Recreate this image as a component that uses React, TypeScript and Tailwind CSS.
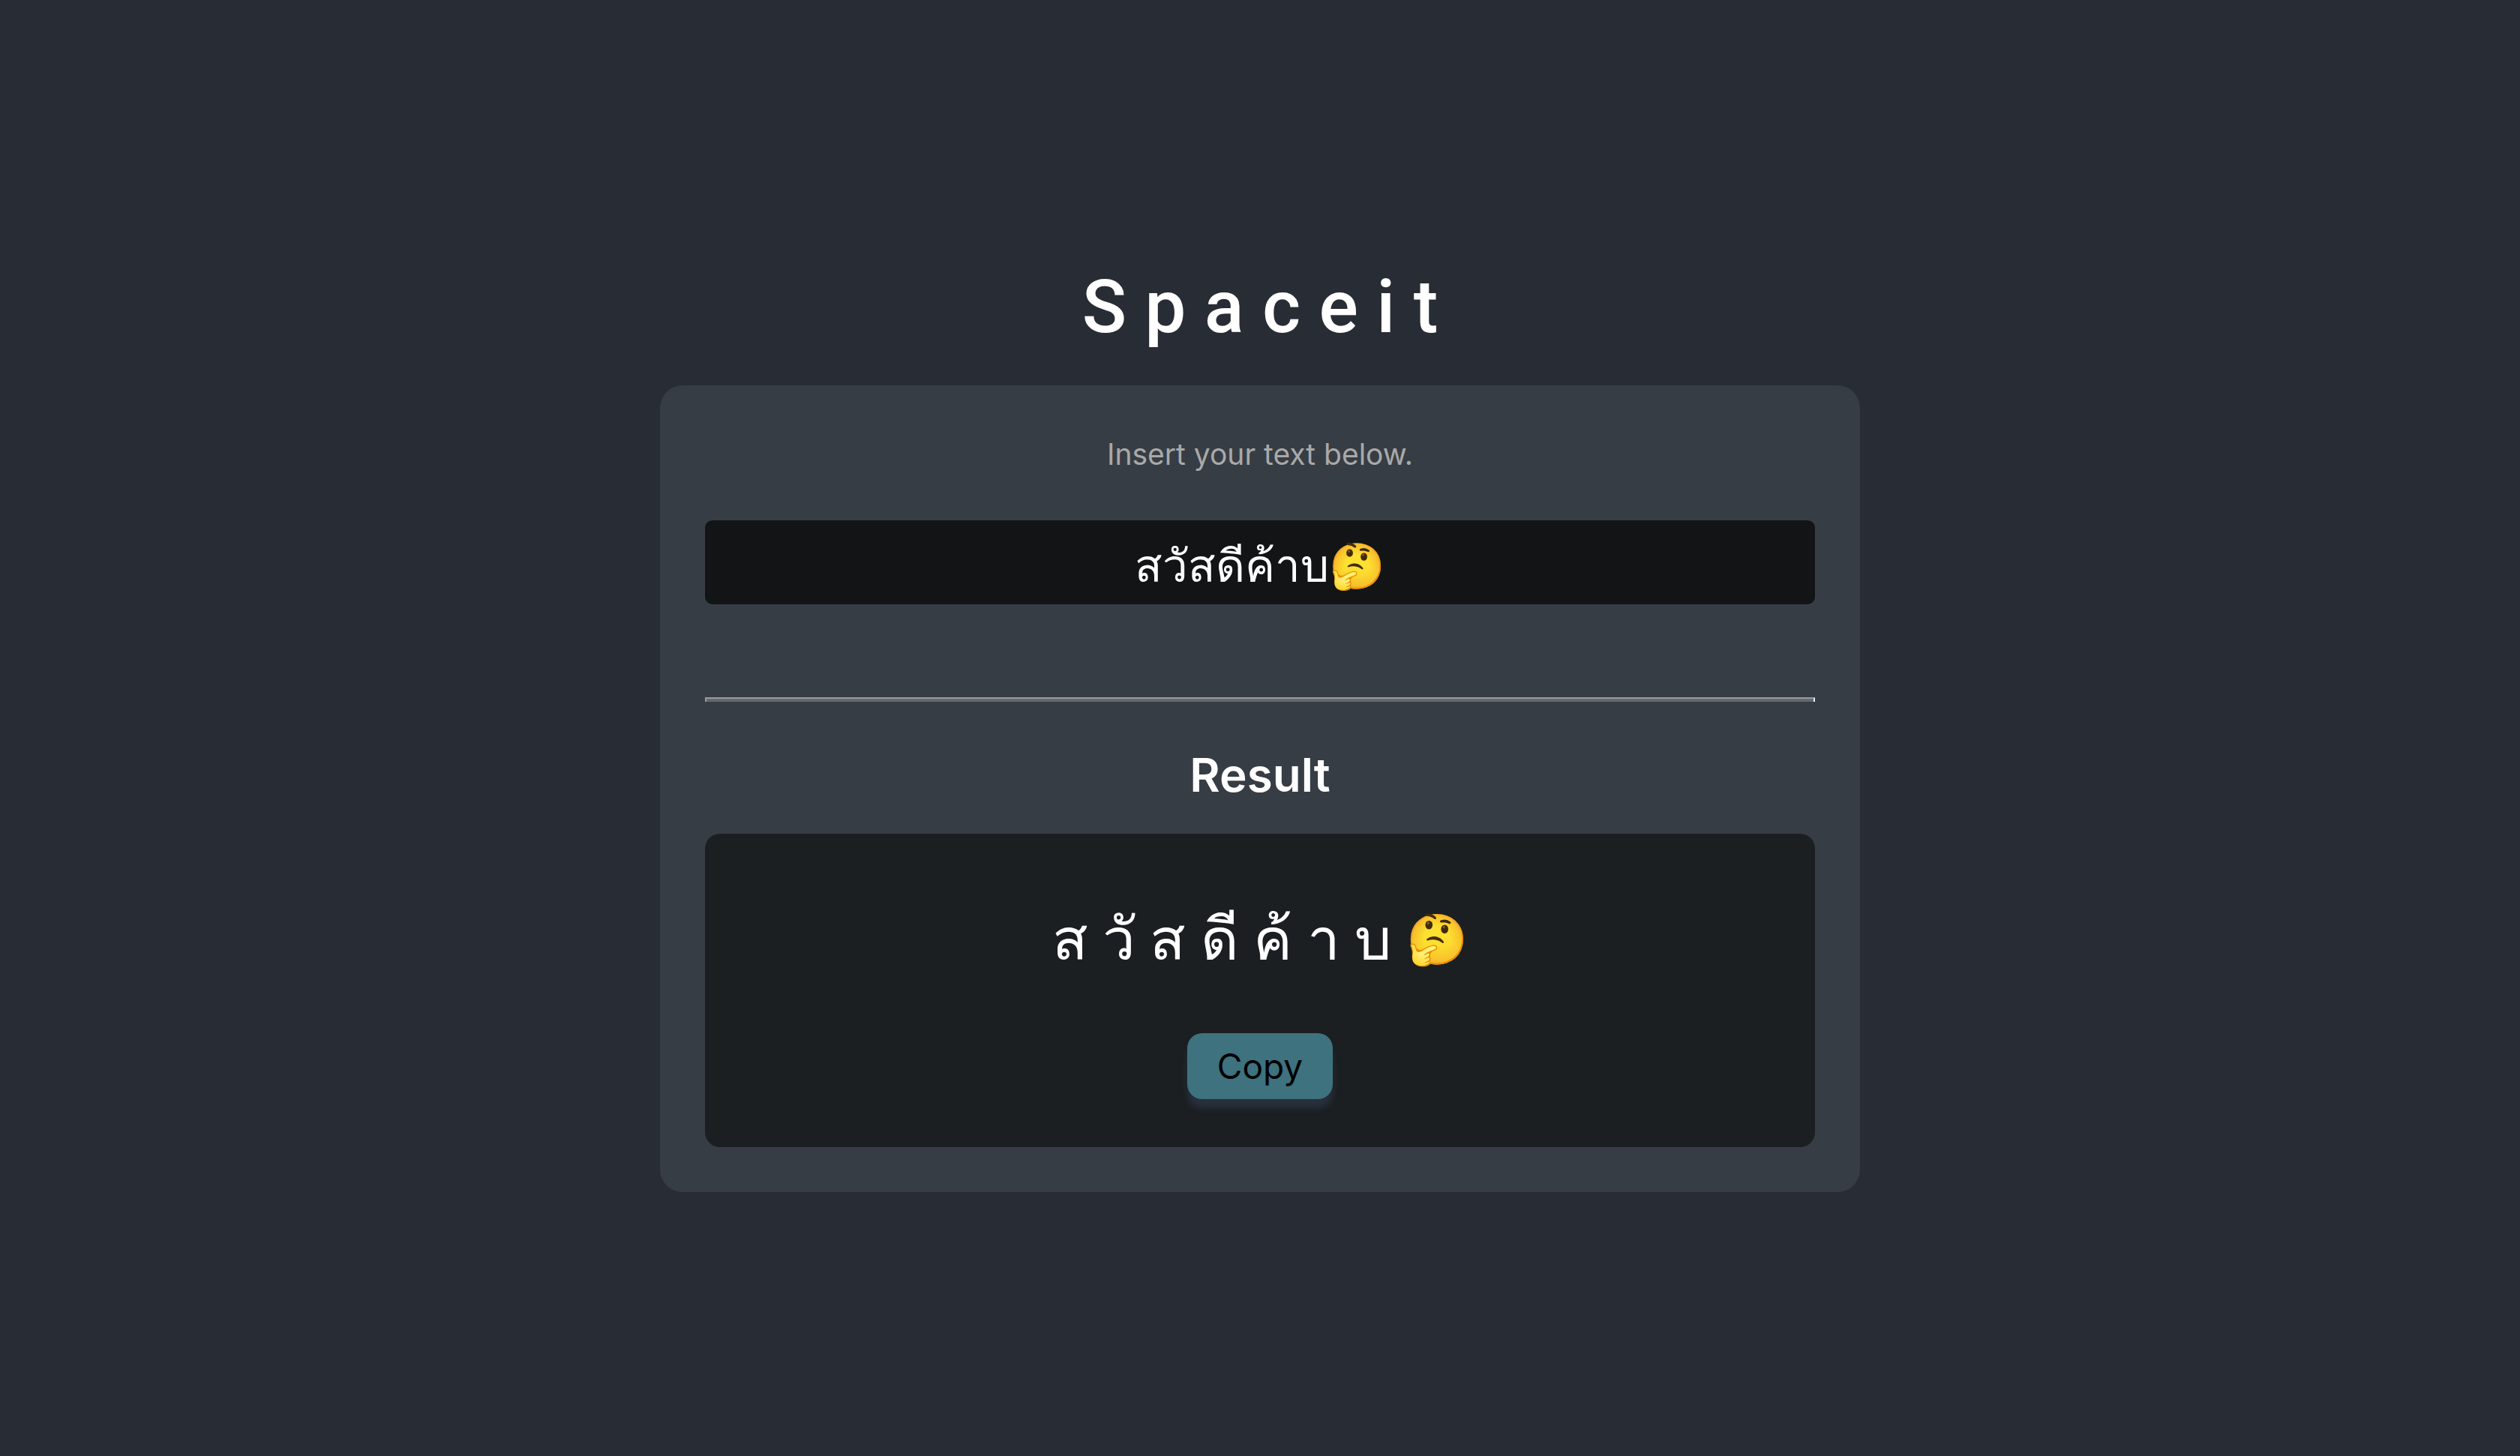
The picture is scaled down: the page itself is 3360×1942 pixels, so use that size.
import { useState } from "react";

const graphemes = (text: string): string[] =>
  Array.from(new Intl.Segmenter("th", { granularity: "grapheme" }).segment(text), (s) => s.segment);

const isEmoji = (char: string) => /\p{Extended_Pictographic}/u.test(char);

function SpacedText({ text }: { text: string }) {
  return (
    <>
      {graphemes(text).map((char, i) => (
        <span key={i}>
          {i > 0 && " "}
          {isEmoji(char) ? <span className="align-[4px] text-[66px] leading-none">{char}</span> : char}
        </span>
      ))}
    </>
  );
}

export default function App() {
  const [text, setText] = useState("สวัสดีค้าบ🤔");

  return (
    <main className="flex min-h-screen flex-col items-center justify-center bg-[#282c34] text-center font-['Inter',sans-serif] text-white">
      <h1 className="mb-[46px] font-['Roboto',sans-serif] text-[98px] leading-[116px] font-medium">S p a c e i t</h1>

      <section className="w-full max-w-[1600px] rounded-[30px] bg-[#373d44] p-[60px]">
        <label htmlFor="source" className="block text-[39px] leading-[64px] text-[#a9a9a9]">
          Insert your text below.
        </label>
        <input
          id="source"
          type="text"
          value={text}
          onChange={(e) => setText(e.target.value)}
          className="mt-[56px] block h-[112px] w-full rounded-[10px] bg-[#121415] px-4 pt-2 text-center text-[60px] font-medium text-white outline-none"
        />

        <hr className="mt-[124px] h-[6px] border-t-2 border-r-2 border-l-2 border-t-[#9a9a9a] border-r-[#eeeeee] border-l-[#9a9a9a] bg-[#646972]" />

        <h2 className="mt-[60px] mb-[40px] text-[62px] leading-[76px] font-semibold">Result</h2>

        <div className="rounded-[20px] bg-[#1b1f22] px-[60px] pt-[94px] pb-[64px]">
          <p className="h-[96px] font-['Roboto',sans-serif] text-[78px] leading-[96px]">
            <SpacedText text={text} />
          </p>
          <button
            type="button"
            onClick={() => navigator.clipboard?.writeText(graphemes(text).join(" "))}
            className="mt-[76px] block h-[88px] rounded-[20px] mx-auto bg-[#3d727e] px-[40px] text-[46px] text-black shadow-[0_12px_8px_#28303c]"
          >
            Copy
          </button>
        </div>
      </section>
    </main>
  );
}
